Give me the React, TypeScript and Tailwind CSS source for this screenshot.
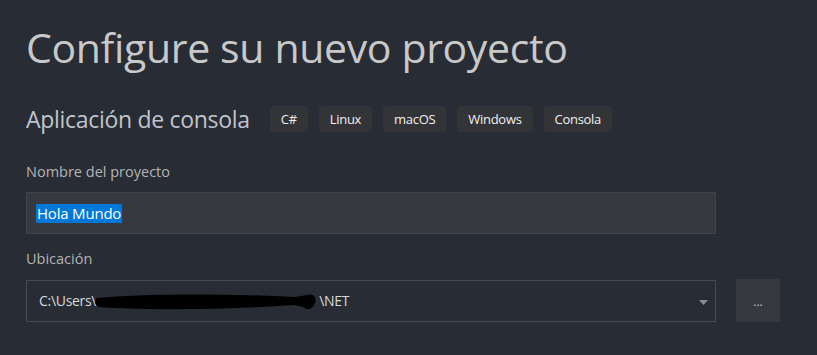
import React from "react";

const font = { fontFamily: '"Open Sans", "Noto Sans", sans-serif' };

export default function App() {
  const tags = ["C#", "Linux", "macOS", "Windows", "Consola"];
  return (
    <div className="w-[817px] h-[355px] bg-[#282c35] overflow-hidden pl-[26px] pt-[22px]" style={font}>
      <h1 className="text-[41px] leading-[50px] text-[#c8c8c8] tracking-[-0.35px]">Configure su nuevo proyecto</h1>
      <div className="flex items-center mt-[34px] h-[26px]">
        <div className="text-[23px] leading-[26px] text-[#c0c4cb] mr-[20px] tracking-[-0.3px]">Aplicación de consola</div>
        <div className="flex gap-[11px]">
          {tags.map((t) => (
            <span key={t} className="h-[26px] px-[11px] rounded-[4px] bg-[#333438] text-[13px] leading-[26px] text-[#f0f0f0] tracking-[-0.3px]">{t}</span>
          ))}
        </div>
      </div>
      <div className="mt-[30px] text-[14.5px] leading-[20px] text-[#b4b4b4]">Nombre del proyecto</div>
      <div className="mt-[10px] w-[690px] h-[42px] bg-[#363940] border border-[#40434b] flex items-center pl-[9px]">
        <span className="bg-[#0078d7] text-white text-[15px] leading-[19px] px-[1px] tracking-[-0.2px]">Hola Mundo</span>
      </div>
      <div className="mt-[15px] text-[14.5px] leading-[20px] text-[#b4b4b4]">Ubicación</div>
      <div className="mt-[10px] flex items-center">
        <div className="relative w-[690px] h-[42px] border border-[#474a52] flex items-center pl-[12px] text-[14px] text-[#d8d8d8] tracking-[-0.3px]">
          <span>C:\Users\</span>
          <svg width="224" height="24" viewBox="0 0 224 24" className="-ml-[1px]">
            <path d="M2 9 C 40 5, 120 4, 200 8 L 212 6 C 218 4, 222 8, 220 14 C 218 20, 212 22, 208 18 L 200 16 C 140 20, 60 22, 4 18 C -1 16, -1 11, 2 9 Z" fill="#000" />
          </svg>
          <span>\NET</span>
          <svg width="9" height="5" viewBox="0 0 9 5" className="absolute right-[7px] top-[19px]">
            <path d="M0 0 H9 L4.5 5 Z" fill="#8a8d93" />
          </svg>
        </div>
        <div className="ml-[20px] w-[44px] h-[43px] bg-[#363940] flex items-center justify-center text-[12px] text-[#c8c8c8] pt-[3px]">...</div>
      </div>
    </div>
  );
}
